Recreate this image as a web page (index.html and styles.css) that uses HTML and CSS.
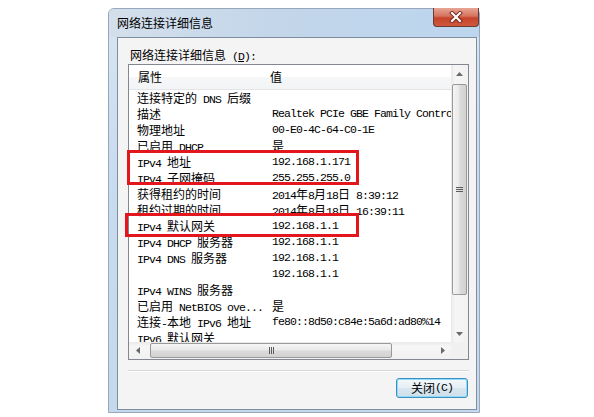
FILE: index.html
```
<!DOCTYPE html>
<html lang="zh-CN">
<head>
<meta charset="utf-8">
<title>网络连接详细信息</title>
<link rel="stylesheet" href="styles.css">
</head>
<body>
<div class="win">
  <div class="titlebar">
    <span class="title">网络连接详细信息</span>
    <div class="close">
      <svg width="14" height="12" viewBox="0 0 14 12"><path d="M3 2 L11 10 M11 2 L3 10" stroke="#6e2519" stroke-width="4" stroke-linecap="square"/><path d="M3 2 L11 10 M11 2 L3 10" stroke="#ffffff" stroke-width="2.2" stroke-linecap="square"/></svg>
    </div>
  </div>
  <div class="frame">
    <div class="client">
      <div class="label"><span class="z">网络连接详细信息</span> (<u>D</u>):</div>
      <div class="listbox">
        <div class="view">
          <div class="hdr"><span class="z">属性</span><span class="z">值</span></div>
          <div class="row"><span><span class="z">连接特定的</span> DNS <span class="z">后缀</span></span><span></span></div>
          <div class="row"><span><span class="z">描述</span></span><span>Realtek PCIe GBE Family Controller</span></div>
          <div class="row"><span><span class="z">物理地址</span></span><span>00-E0-4C-64-C0-1E</span></div>
          <div class="row"><span><span class="z">已启用</span> DHCP</span><span><span class="z">是</span></span></div>
          <div class="row"><span>IPv4 <span class="z">地址</span></span><span>192.168.1.171</span></div>
          <div class="row"><span>IPv4 <span class="z">子网掩码</span></span><span>255.255.255.0</span></div>
          <div class="row"><span><span class="z">获得租约的时间</span></span><span>2014<span class="z">年</span>8<span class="z">月</span>18<span class="z">日</span> 8:39:12</span></div>
          <div class="row"><span><span class="z">租约过期的时间</span></span><span>2014<span class="z">年</span>8<span class="z">月</span>18<span class="z">日</span> 16:39:11</span></div>
          <div class="row"><span>IPv4 <span class="z">默认网关</span></span><span>192.168.1.1</span></div>
          <div class="row"><span>IPv4 DHCP <span class="z">服务器</span></span><span>192.168.1.1</span></div>
          <div class="row"><span>IPv4 DNS <span class="z">服务器</span></span><span>192.168.1.1</span></div>
          <div class="row"><span></span><span>192.168.1.1</span></div>
          <div class="row"><span>IPv4 WINS <span class="z">服务器</span></span><span></span></div>
          <div class="row"><span><span class="z">已启用</span> NetBIOS ove...</span><span><span class="z">是</span></span></div>
          <div class="row"><span><span class="z">连接</span>-<span class="z">本地</span> IPv6 <span class="z">地址</span></span><span>fe80::8d50:c84e:5a6d:ad80%14</span></div>
          <div class="row"><span>IPv6 <span class="z">默认网关</span></span><span></span></div>
        </div>
        <div class="vscroll">
          <div class="sbtn"><svg width="7" height="4" viewBox="0 0 7 4"><path d="M0 4 L3.5 0 L7 4 Z" fill="#6a6a6a"/></svg></div>
          <div class="vtrack">
            <div class="vthumb"><svg width="7" height="5" viewBox="0 0 7 5"><path d="M0 0.5 H7 M0 2.5 H7 M0 4.5 H7" stroke="#5b5b5b" stroke-width="1"/></svg></div>
          </div>
          <div class="sbtn"><svg width="7" height="4" viewBox="0 0 7 4"><path d="M0 0 L3.5 4 L7 0 Z" fill="#6a6a6a"/></svg></div>
        </div>
        <div class="hscroll">
          <div class="sbtn"><svg width="4" height="7" viewBox="0 0 4 7"><path d="M4 0 L0 3.5 L4 7 Z" fill="#6a6a6a"/></svg></div>
          <div class="htrack">
            <div class="hthumb"><svg width="5" height="7" viewBox="0 0 5 7"><path d="M0.5 0 V7 M2.5 0 V7 M4.5 0 V7" stroke="#5b5b5b" stroke-width="1"/></svg></div>
          </div>
          <div class="sbtn"><svg width="4" height="7" viewBox="0 0 4 7"><path d="M0 0 L4 3.5 L0 7 Z" fill="#6a6a6a"/></svg></div>
        </div>
        <div class="corner"></div>
        <div class="mark m1"></div>
        <div class="mark m2"></div>
      </div>
      <div class="sep"></div>
      <div class="btnrow"><div class="btn"><span class="z">关闭</span>(C)</div></div>
    </div>
  </div>
</div>
</body>
</html>
```

FILE: styles.css
```
* { box-sizing: border-box; }

body {
  margin: 0;
  width: 594px;
  height: 417px;
  overflow: hidden;
  background: #ffffff;
}

.win {
  margin: 8px 0 0 108px;
  width: 372px;
  height: 405px;
  border: 1px solid #97a8bc;
  border-radius: 6px 6px 0 0;
  background: linear-gradient(to bottom, #d9e5f2 0%, #c9dbee 40%, #c6d9ec 100%);
  display: flex;
  flex-direction: column;
}

.titlebar {
  height: 28px;
  display: flex;
  align-items: flex-start;
  padding-left: 8px;
  background: linear-gradient(to right, #d4dfeb 0%, #c3d6ea 45%, #bcd6ee 100%);
  border-radius: 5px 5px 0 0;
}

.title {
  font-family: "Noto Sans CJK SC", sans-serif;
  font-size: 12px;
  line-height: 16px;
  margin-top: 6px;
  color: #000;
}

.close {
  margin-left: auto;
  margin-top: -1px;
  width: 46px;
  height: 19px;
  border: 1px solid #6b3a33;
  border-top: none;
  border-radius: 0 0 4px 4px;
  background: linear-gradient(to bottom, #e7a595 0%, #d6735d 45%, #c5432b 55%, #d0583c 100%);
  display: flex;
  align-items: center;
  justify-content: center;
}

.frame {
  flex: 1;
  display: flex;
  padding: 0 2px 2px 8px;
}

.client {
  flex: 1;
  border: 1px solid #7e8ea1;
  background: #f4f4f4;
  padding: 8px 7px 0 10px;
  font-family: "Liberation Mono", monospace;
  font-size: 11.5px;
  letter-spacing: -0.9px;
  color: #000;
}

.z {
  font-family: "Noto Sans CJK SC", sans-serif;
  font-size: 12px;
  letter-spacing: 0;
}

.label {
  height: 18px;
  line-height: 18px;
  padding-left: 2px;
  white-space: nowrap;
}

.listbox {
  position: relative;
  width: 341px;
  height: 296px;
  border: 1px solid #828790;
  background: #ffffff;
  display: grid;
  grid-template-columns: 1fr 17px;
  grid-template-rows: 1fr 17px;
}

.view {
  overflow: hidden;
  min-width: 0;
}

.hdr {
  display: grid;
  grid-template-columns: 132px auto;
  height: 25px;
  padding-left: 9px;
  line-height: 24px;
  border-bottom: 1px solid #e3e5e8;
  background: linear-gradient(to bottom, #ffffff 0%, #ffffff 50%, #f6f7f9 51%, #f3f4f6 100%);
}

.row {
  display: grid;
  grid-template-columns: 143px auto;
  height: 16px;
  line-height: 16px;
  white-space: nowrap;
}

.row > span:first-child {
  padding-left: 8px;
  overflow: hidden;
}

.vscroll {
  display: flex;
  flex-direction: column;
  background: linear-gradient(to right, #e9e9e9 0%, #f6f6f6 25%, #f1f1f1 100%);
}

.hscroll {
  display: flex;
  background: linear-gradient(to bottom, #e9e9e9 0%, #f6f6f6 25%, #f1f1f1 100%);
}

.sbtn {
  flex: 0 0 17px;
  display: flex;
  align-items: center;
  justify-content: center;
}

.vtrack {
  flex: 1;
  display: flex;
  flex-direction: column;
  padding: 2px 1px 0 1px;
}

.vthumb {
  height: 211px;
  border: 1px solid #999999;
  border-radius: 2px;
  background: linear-gradient(to right, #f5f5f5 0%, #e9e9e9 45%, #dadada 55%, #d2d2d2 100%);
  display: flex;
  align-items: center;
  justify-content: center;
}

.htrack {
  flex: 1;
  display: flex;
  padding: 1px 0 1px 4px;
}

.hthumb {
  width: 242px;
  border: 1px solid #999999;
  border-radius: 2px;
  background: linear-gradient(to bottom, #f5f5f5 0%, #e9e9e9 45%, #dadada 55%, #d2d2d2 100%);
  display: flex;
  align-items: center;
  justify-content: center;
}

.corner {
  background: #f0f0f0;
}

.mark {
  position: absolute;
  border: 3px solid #e3161e;
}

.m1 {
  left: -2px;
  top: 85px;
  width: 232px;
  height: 35px;
}

.m2 {
  left: -4px;
  top: 148px;
  width: 234px;
  height: 24px;
}

.sep {
  width: 341px;
  margin-top: 10px;
  height: 2px;
  border-top: 1px solid #d9d9d9;
  border-bottom: 1px solid #ffffff;
}

.btnrow {
  width: 341px;
  display: flex;
  justify-content: flex-end;
  margin-top: 6px;
  padding-right: 1px;
}

.btn {
  width: 72px;
  height: 20px;
  border: 1px solid #3c8fc4;
  border-radius: 3px;
  box-shadow: inset 0 0 0 1px #8fdcf7;
  background: linear-gradient(to bottom, #f3f8fb 0%, #e6eff5 50%, #d8e6ef 51%, #cfe0eb 100%);
  display: flex;
  align-items: center;
  justify-content: center;
  line-height: 16px;
  white-space: nowrap;
}
```
